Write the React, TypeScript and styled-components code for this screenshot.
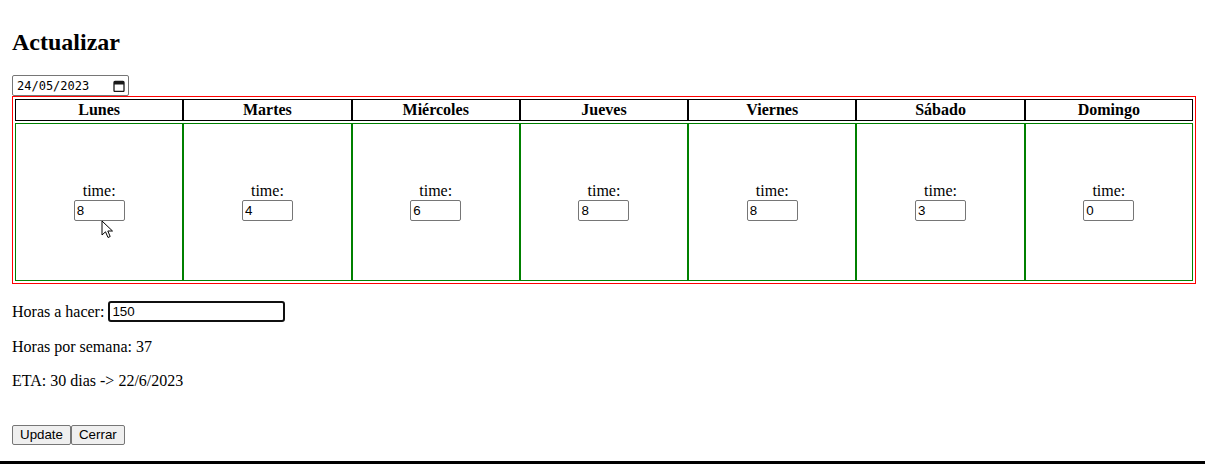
import styled, { createGlobalStyle } from "styled-components";

const GlobalStyle = createGlobalStyle`
  body {
    margin: 0;
    background: #ffffff;
    color: #000000;
    font-family: "Liberation Serif", "Times New Roman", serif;
    font-size: 16px;
  }
`;

const days = [
  { name: "Lunes", time: "8" },
  { name: "Martes", time: "4" },
  { name: "Miércoles", time: "6" },
  { name: "Jueves", time: "8" },
  { name: "Viernes", time: "8" },
  { name: "Sábado", time: "3" },
  { name: "Domingo", time: "0" },
];

const App = () => {
  return (
    <>
      <GlobalStyle />
      <PageStyled>
        <TitleStyled>Actualizar</TitleStyled>
        <DateInputStyled>
          <span>24/05/2023</span>
          <CalendarIcon />
        </DateInputStyled>
        <WeekTableStyled>
          <WeekRowStyled>
            {days.map((d) => (
              <DayHeaderStyled key={d.name}>{d.name}</DayHeaderStyled>
            ))}
          </WeekRowStyled>
          <WeekRowStyled>
            {days.map((d, i) => (
              <DayCellStyled key={d.name}>
                <span>time:</span>
                <SmallInputStyled defaultValue={d.time} />
                {i === 0 && <Cursor />}
              </DayCellStyled>
            ))}
          </WeekRowStyled>
        </WeekTableStyled>
        <LineStyled>
          Horas a hacer: <HoursInputStyled defaultValue="150" />
        </LineStyled>
        <LineStyled>Horas por semana: 37</LineStyled>
        <LineStyled>ETA: 30 dias -&gt; 22/6/2023</LineStyled>
        <ButtonRowStyled>
          <ButtonStyled>Update</ButtonStyled>
          <ButtonStyled>Cerrar</ButtonStyled>
        </ButtonRowStyled>
      </PageStyled>
      <BottomBarStyled />
    </>
  );
};

const CalendarIcon = () => (
  <svg width="12" height="12" viewBox="0 0 12 12">
    <rect x="1" y="1.5" width="10" height="10" rx="1" fill="none" stroke="#1a1a1a" strokeWidth="1.3" />
    <rect x="1" y="1.5" width="10" height="3" fill="#1a1a1a" />
  </svg>
);

const Cursor = () => (
  <CursorStyled width="14" height="20" viewBox="0 0 14 20">
    <path
      d="M1 1 L1 15 L4.5 11.8 L7 17.5 L9.2 16.5 L6.8 11 L11.5 11 Z"
      fill="#ffffff"
      stroke="#000000"
      strokeWidth="1"
      strokeLinejoin="round"
    />
  </CursorStyled>
);

const PageStyled = styled.div`
  padding: 8px 9px 0 12px;
`;

const TitleStyled = styled.h2`
  font-size: 24px;
  font-weight: bold;
  line-height: 28px;
  margin: 20px 0 19px;
`;

const DateInputStyled = styled.div`
  display: flex;
  align-items: center;
  justify-content: space-between;
  box-sizing: border-box;
  width: 117px;
  height: 21px;
  padding: 0 3px 0 4px;
  border: 1px solid #767676;
  border-radius: 2px;
  font-family: "DejaVu Sans Mono", "Liberation Mono", monospace;
  font-size: 12px;
  color: #000000;
`;

const WeekTableStyled = styled.div`
  display: flex;
  flex-direction: column;
  gap: 2px;
  box-sizing: border-box;
  width: 1184px;
  padding: 2px;
  border: 1px solid #ff0000;
`;

const WeekRowStyled = styled.div`
  display: flex;
`;

const DayHeaderStyled = styled.div`
  flex: 1;
  height: 22px;
  box-sizing: border-box;
  border: 1px solid #000000;
  text-align: center;
  font-weight: bold;
  line-height: 20px;
`;

const DayCellStyled = styled.div`
  position: relative;
  flex: 1;
  height: 158px;
  box-sizing: border-box;
  border: 1px solid #008000;
  display: flex;
  flex-direction: column;
  align-items: center;
  justify-content: center;
  line-height: 18px;
  padding-bottom: 1px;
`;

const SmallInputStyled = styled.input`
  box-sizing: border-box;
  width: 51px;
  height: 21px;
  padding: 1px 2px;
  border: 1px solid #767676;
  border-radius: 2px;
  font-family: "Liberation Sans", Arial, sans-serif;
  font-size: 13.33px;
  color: #000000;
`;

const CursorStyled = styled.svg`
  position: absolute;
  left: 85px;
  top: 96px;
`;

const LineStyled = styled.p`
  margin: 16px 0;
  line-height: 18px;
  display: flex;
  align-items: center;
  gap: 4px;
  min-height: 18px;
  &:first-of-type {
    margin-top: 17px;
  }
`;

const HoursInputStyled = styled.input`
  box-sizing: border-box;
  width: 177px;
  height: 21px;
  padding: 1px 2px;
  border: 2px solid #101010;
  border-radius: 3px;
  outline: none;
  font-family: "Liberation Sans", Arial, sans-serif;
  font-size: 13.33px;
  color: #000000;
`;

const ButtonRowStyled = styled.div`
  display: flex;
  margin-top: 35px;
`;

const ButtonStyled = styled.button`
  height: 20px;
  padding: 1px 7px;
  border: 1px solid #767676;
  border-radius: 2px;
  background: #efefef;
  font-family: "Liberation Sans", Arial, sans-serif;
  font-size: 13.33px;
  color: #000000;
  line-height: 16px;
`;

const BottomBarStyled = styled.div`
  height: 3px;
  margin-top: 16px;
  background: #000000;
`;

export default App;
